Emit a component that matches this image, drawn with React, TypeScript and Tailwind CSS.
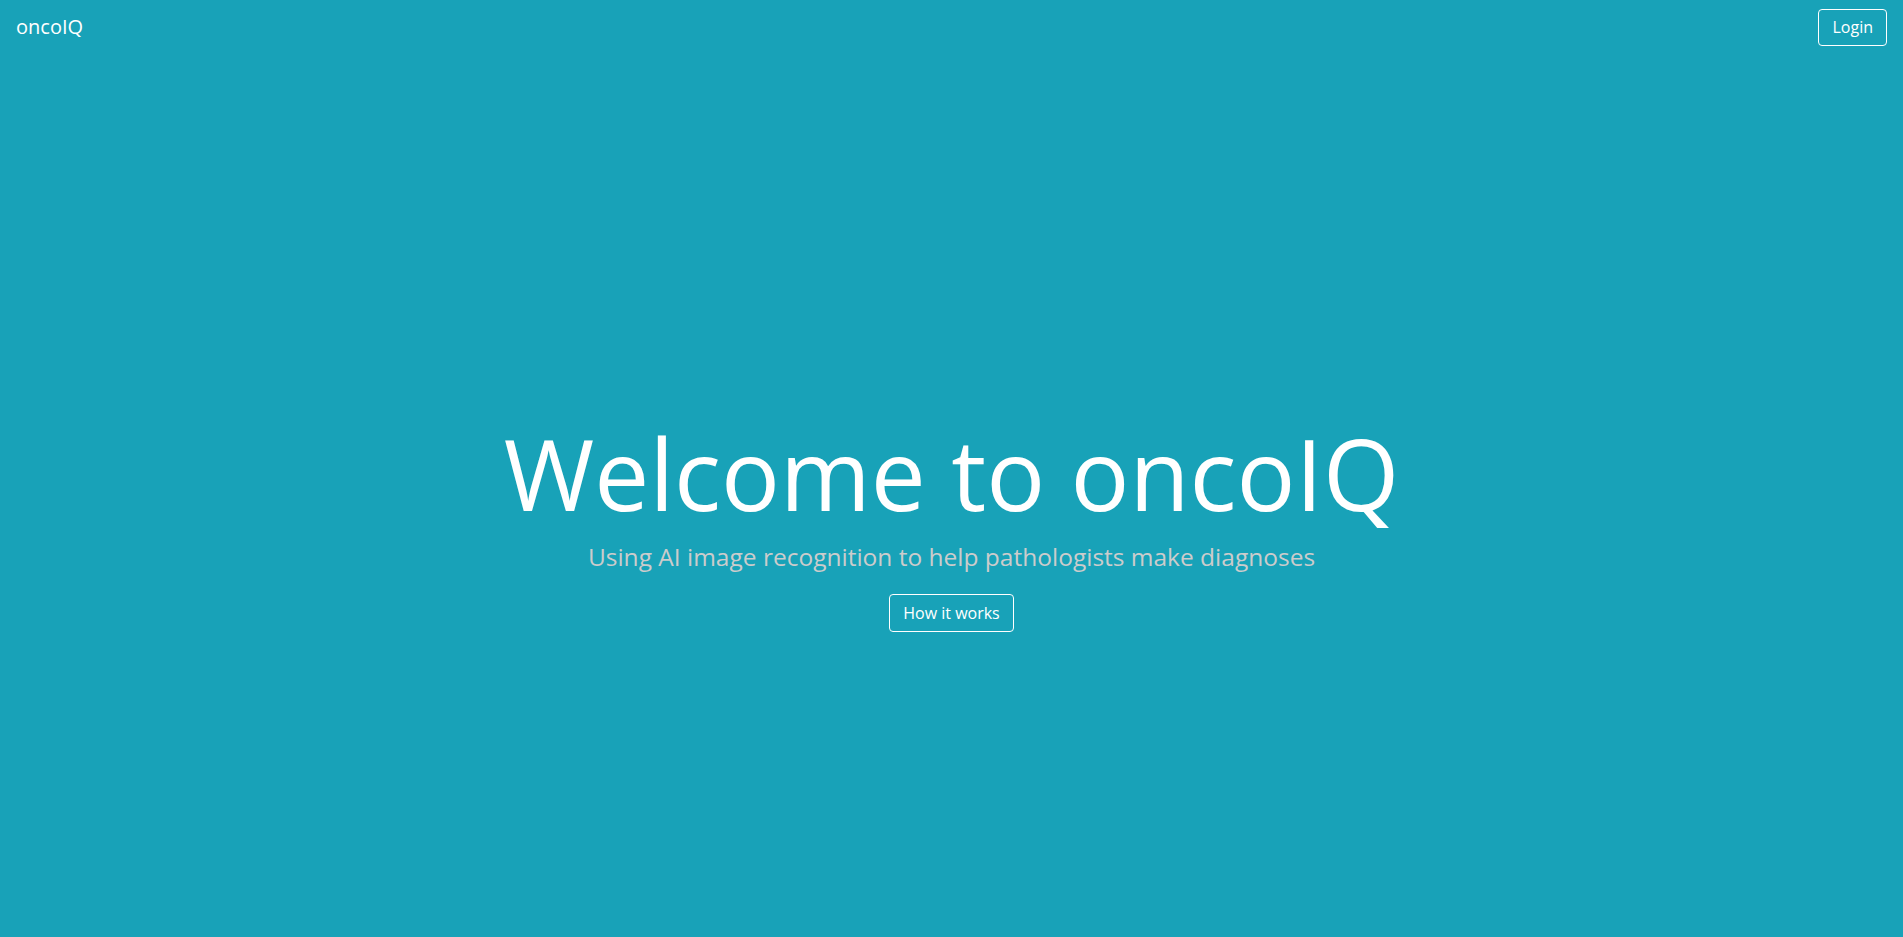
export default function App(): JSX.Element {
  return (
    <div className="flex min-h-screen flex-col bg-[#18a2b8] font-['Open_Sans',sans-serif] text-white">
      <header className="flex items-center justify-between px-4 py-2">
        <a href="#" className="text-[20px] leading-[38px]">
          oncoIQ
        </a>
        <button className="mt-px rounded border border-white px-[13px] text-[16px] leading-[35px]">
          Login
        </button>
      </header>
      <main className="flex flex-1 flex-col items-center justify-center pt-[56px] text-center">
        <h1 className="text-[98px] leading-[1.2]">Welcome to oncoIQ</h1>
        <p className="mt-[6px] text-[24.5px] leading-[1.5] text-[#cccccc]">
          Using AI image recognition to help pathologists make diagnoses
        </p>
        <button className="mt-[18px] rounded border border-white px-[13px] text-[16px] leading-[36px]">
          How it works
        </button>
      </main>
    </div>
  );
}
